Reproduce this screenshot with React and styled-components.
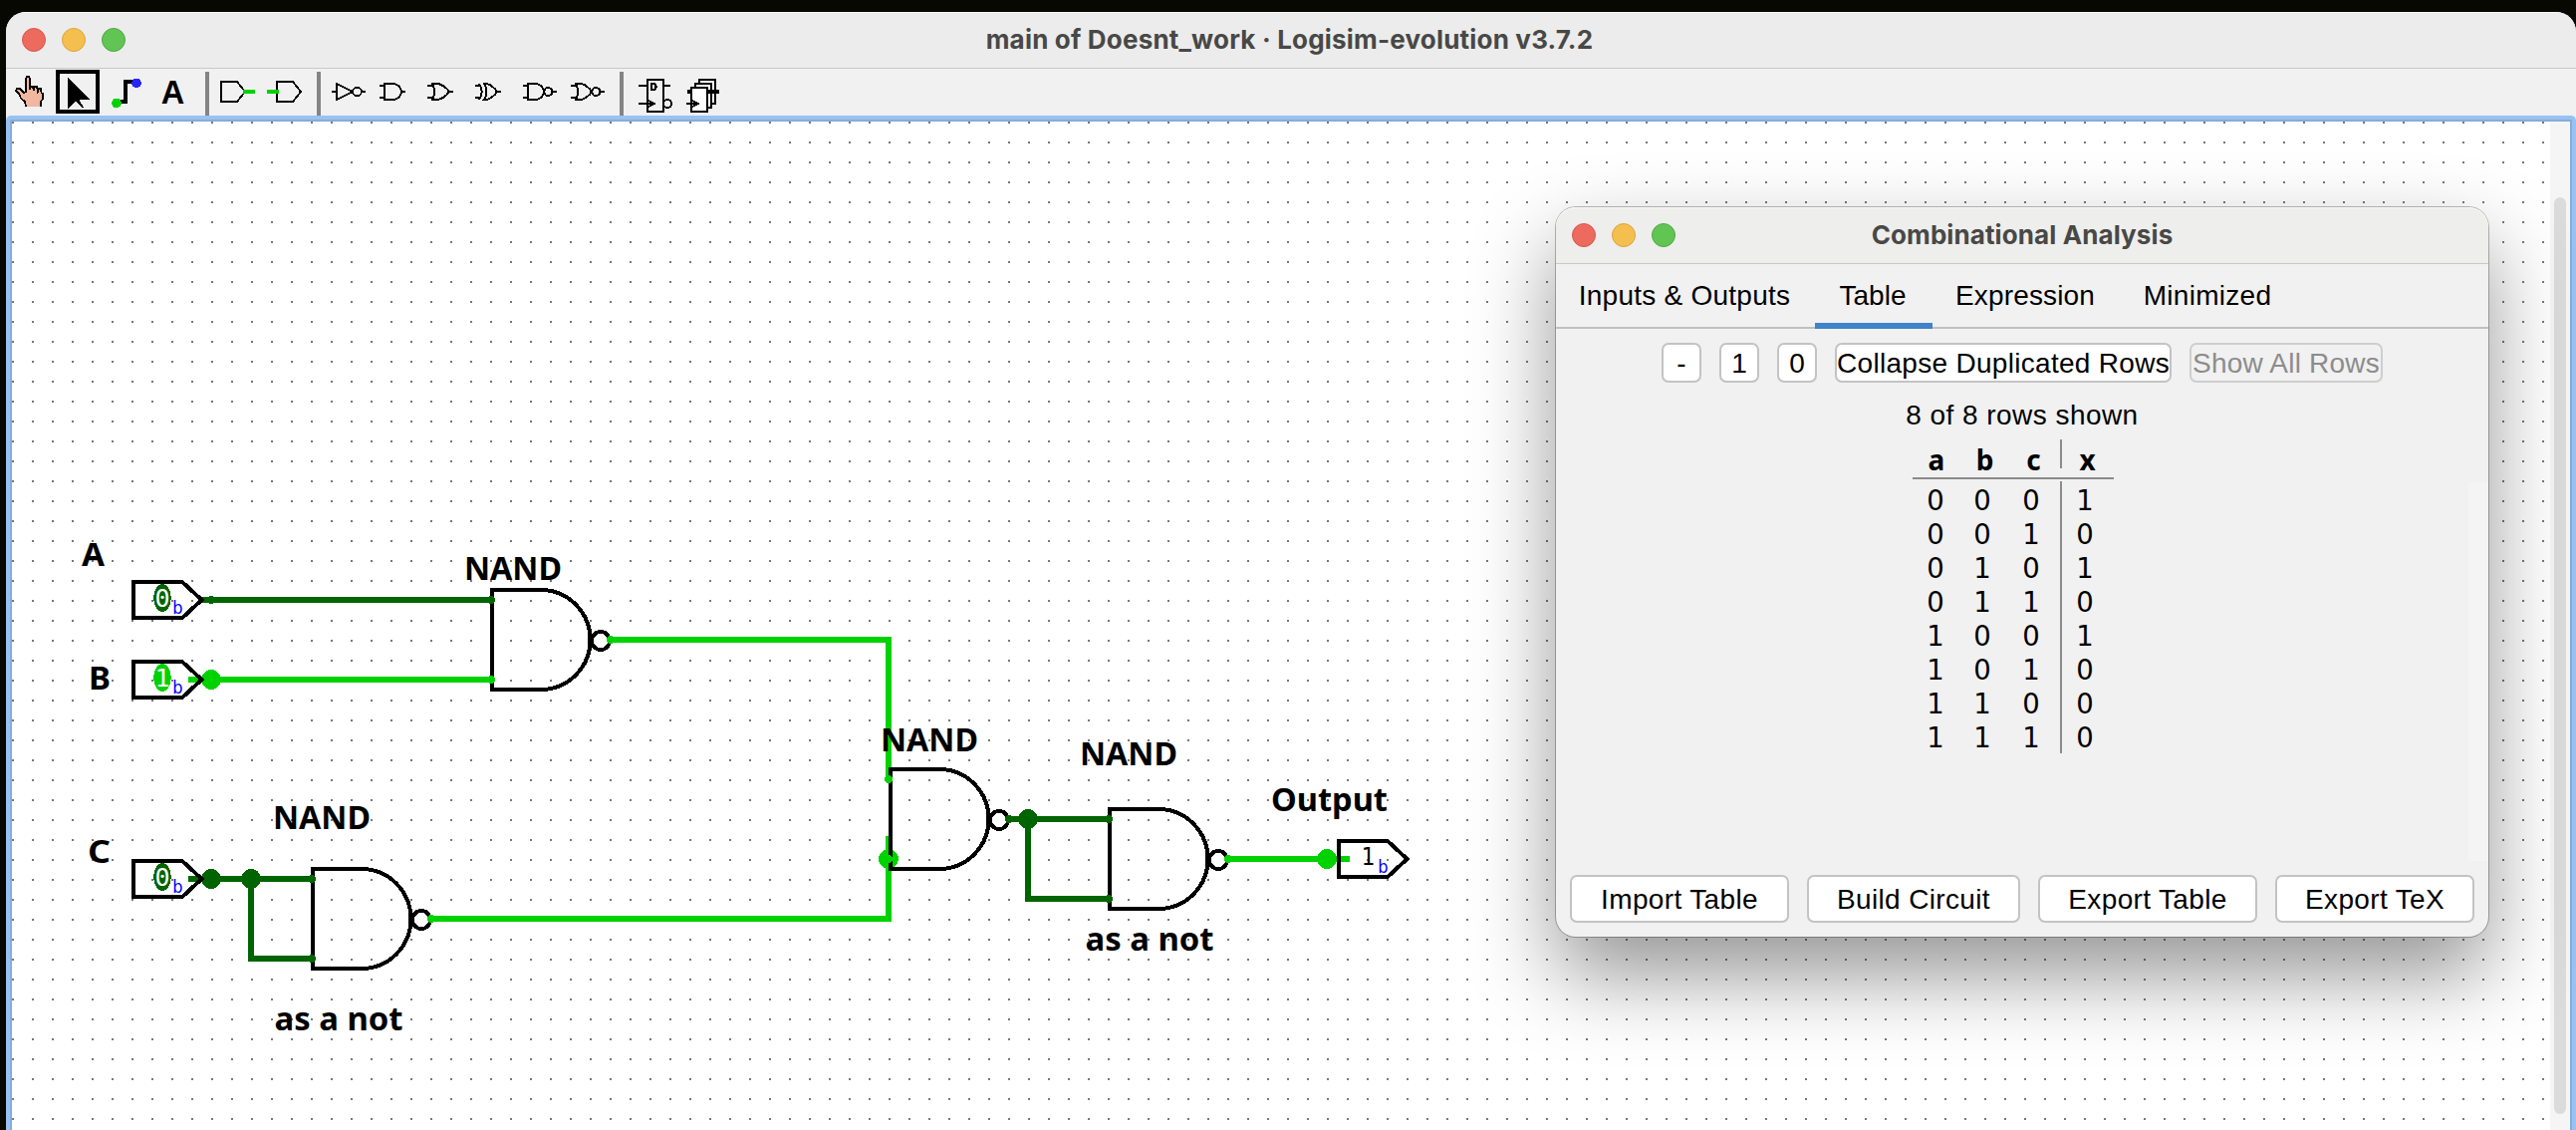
import React from "react";
import styled, { createGlobalStyle } from "styled-components";

const GlobalStyle = createGlobalStyle`
  *, *::before, *::after { box-sizing: border-box; }
  html, body { margin: 0; padding: 0; background: #080803; overflow: hidden; }
`;

const ON = "#00d200";
const OFF = "#006400";

const Desktop = styled.div`
  position: relative;
  display: flex;
  width: 2586px;
  height: 1134px;
  padding: 12px 0 0 6px;
  overflow: hidden;
  background: #080803;
`;

const MainWindow = styled.main`
  display: flex;
  flex-direction: column;
  flex: 1;
  background: #f1f1f1;
  border-radius: 20px 20px 0 0;
  overflow: hidden;
`;

const TitleBar = styled.header`
  position: relative;
  display: flex;
  align-items: center;
  justify-content: center;
  flex: none;
  height: ${(p) => p.$height}px;
  padding: 0 ${(p) => p.$shift || 0}px 1px 0;
  background: ${(p) => p.$bg};
  border-bottom: 1px solid #c9c9c9;
  box-shadow: inset 0 1px 0 #fafafa;
`;

const Title = styled.h1`
  margin: 0;
  color: #484846;
  font: 700 26px/32px Inter, "Liberation Sans", sans-serif;
  letter-spacing: ${(p) => p.$spacing}px;
  white-space: nowrap;
`;

const Lights = styled.div`
  position: absolute;
  left: 16px;
  top: ${(p) => p.$top}px;
  display: flex;
  gap: 16px;
`;

const Light = styled.span`
  width: 24px;
  height: 24px;
  border-radius: 50%;
  background: ${(p) => p.$fill};
  border: 1px solid ${(p) => p.$edge};
`;

const Toolbar = styled.nav`
  display: flex;
  flex: none;
  height: 47px;
  padding-top: 1px;
`;

const Tool = styled.svg`
  display: block;
  flex: none;
  width: 48px;
  height: 46px;
  fill: none;
  stroke: #000;
  stroke-width: 2;
`;

const Separator = styled.span`
  width: 4px;
  height: 44px;
  margin: 2px 6px 0 ${(p) => p.$before || 6}px;
  background: #848484;
`;

const Workspace = styled.section`
  display: flex;
  flex: 1;
  border-style: solid;
  border-color: #97c2f2;
  border-width: 4px 4px 0 4px;
  border-radius: 5px 5px 0 0;
`;

const WorkspaceInner = styled.div`
  display: flex;
  flex: 1;
  border-style: solid;
  border-color: #86add9;
  border-width: 2px 2px 0 2px;
  background: #fff;
`;

const Canvas = styled.svg`
  display: block;
  flex: none;
  width: 2548px;
  height: 1012px;
`;

const Scrollbar = styled.div`
  flex: none;
  width: 20px;
  padding: 76px 4px 0;
  background: #f5f5f5;
`;

const Thumb = styled.div`
  height: 920px;
  border-radius: 6px;
  background: #dbdbdb;
`;

const Dialog = styled.section`
  position: absolute;
  left: 1562px;
  top: 208px;
  display: flex;
  flex-direction: column;
  width: 936px;
  height: 732px;
  border-radius: 20px;
  background: #f1f1f1;
  box-shadow: 0 0 0 1px rgba(0, 0, 0, 0.27), 0 38px 84px rgba(0, 0, 0, 0.42);
  font: 400 28px/32px "Liberation Sans", Arial, sans-serif;
  color: #000;
`;

const DialogBar = styled(TitleBar)`
  border-radius: 20px 20px 0 0;
`;

const Tabs = styled.div`
  display: flex;
  flex: none;
  height: 65px;
  border-bottom: 2px solid #c0c0c0;
`;

const Tab = styled.button`
  display: flex;
  align-items: center;
  justify-content: center;
  flex: none;
  width: ${(p) => p.$width}px;
  height: 65px;
  padding: 4px 2px 0 0;
  border: 0;
  border-bottom: 6px solid ${(p) => (p.$active ? "#4083c9" : "transparent")};
  background: none;
  color: inherit;
  font: inherit;
  letter-spacing: ${(p) => p.$spacing || 0}px;
  white-space: nowrap;
`;

const ButtonRow = styled.div`
  display: flex;
  flex: none;
  justify-content: center;
  gap: 18px;
  padding-top: ${(p) => p.$top || 0}px;
`;

const Button = styled.button`
  display: flex;
  align-items: center;
  justify-content: center;
  flex: none;
  width: ${(p) => p.$width}px;
  height: ${(p) => p.$height || 40}px;
  padding: 2px 0 0;
  border: 2px solid ${(p) => (p.disabled ? "#cecece" : "#c3c3c3")};
  border-radius: 7px;
  background: ${(p) => (p.disabled ? "#f1f1f1" : "#fff")};
  color: ${(p) => (p.disabled ? "#8c8c8c" : "#000")};
  font: inherit;
  letter-spacing: ${(p) => p.$spacing || 0}px;
  white-space: nowrap;
`;

const RowCount = styled.p`
  flex: none;
  margin: 17px 0 0;
  text-align: center;
  letter-spacing: 0.45px;
`;

const TableArea = styled.div`
  display: grid;
  grid-template-columns: 1fr 20px;
  flex: 1;
  padding-top: 8px;
`;

const TruthTable = styled.div`
  display: flex;
  flex-direction: column;
  align-self: start;
  width: 202px;
  margin-left: 358px;
`;

const HeadRow = styled.div`
  display: grid;
  grid-template-columns: 48px 49px 49px 56px;
  height: 40px;
  border-bottom: 2px solid #8a8a8a;
  font: 700 28px/41px "Noto Sans", sans-serif;
  text-align: center;
`;

const HeadCell = styled.span`
  position: relative;
  &:last-child {
    padding-left: 3px;
  }
  &:last-child::before {
    content: "";
    position: absolute;
    left: 2px;
    top: 0;
    width: 2px;
    height: 29px;
    background: #8c8c8c;
  }
`;

const BodyGrid = styled.div`
  display: grid;
  grid-template-columns: 46px 48px 50px 58px;
  grid-auto-rows: 34px;
  margin-top: 2px;
  padding-bottom: 1px;
  background: linear-gradient(#8c8c8c, #8c8c8c) 148px 0 / 2px 100% no-repeat;
  font: 400 27.5px/39px "DejaVu Sans", sans-serif;
  text-align: center;
`;

const TableScroll = styled.div`
  height: 380px;
  margin-top: 43px;
  background: #f4f4f4;
`;

const Footer = styled(ButtonRow)`
  height: 62px;
`;

const light = [
  ["#ed6a5e", "#d9564b"],
  ["#f5bf4f", "#dba43c"],
  ["#61c554", "#50a744"],
];

function WindowLights({ top }) {
  return (
    <Lights $top={top}>
      {light.map(([fill, edge]) => (
        <Light key={fill} $fill={fill} $edge={edge} />
      ))}
    </Lights>
  );
}

function Icon({ x, children }) {
  return (
    <Tool viewBox={`${x} 70 48 46`} shapeRendering="crispEdges">
      {children}
    </Tool>
  );
}

function ToolIcons() {
  return (
    <Toolbar>
      <Icon x={6}>
        <path
          d="M26 107L25 102L21 98.500L19 94L16 91L17 89L20 89L24 93L26 92V79L27 77H29L30 79V90L31 87H33L34 91L35 87H37L38 92L39 89H41L41.500 93L43 94V99L41 102V107"
          fill="#f1b79f"
          strokeWidth="1.700"
        />
      </Icon>
      <Icon x={54}>
        <rect x="58" y="72" width="40" height="40" strokeWidth="4" />
        <path d="M68 77V110L76 101L82 108H84L79 99.500H90Z" fill="#000" stroke="none" />
      </Icon>
      <Icon x={102}>
        <path d="M117 102H126V82H136" strokeWidth="4" />
        <circle cx="117" cy="103.500" r="4.800" fill={ON} stroke="none" />
        <circle cx="137" cy="83.300" r="4.800" fill="#2626ff" stroke="none" />
      </Icon>
      <Icon x={150}>
        <text x="173.500" y="104" textAnchor="middle" fill="#000" stroke="none" fontFamily="Liberation Sans, Arial, sans-serif" fontWeight="700" fontSize="32.500">
          A
        </text>
      </Icon>
      <Separator $before={8} />
      <Icon x={216}>
        <path d="M222 82H238L246 92L238 102H222Z" />
        <path d="M244 92H256" stroke={ON} strokeWidth="4" />
      </Icon>
      <Icon x={264}>
        <path d="M278 82H294L302 92L294 102H278Z" />
        <path d="M268 92H280" stroke={ON} strokeWidth="4" />
      </Icon>
      <Separator />
      <Icon x={328}>
        <path d="M333 92H338M338 84L354 92L338 100ZM363 92H367" />
        <circle cx="358.500" cy="92" r="4.300" />
      </Icon>
      <Icon x={376}>
        <path d="M381 86H386M381 98H386M386 84H395Q402 85 403 92Q402 99 395 100H386ZM403 92H407" />
      </Icon>
      <Icon x={424}>
        <path d="M429 86H435M429 98H435M434 84H440Q447 86 451 92Q447 98 440 100H434Q438 92 434 84ZM451 92H455" />
      </Icon>
      <Icon x={472}>
        <path d="M477 86H483M477 98H483M481 84Q486.500 92 481 100M486 84H489Q495 86 499 92Q495 98 489 100H486Q491 92 486 84ZM498 92H503" />
      </Icon>
      <Icon x={520}>
        <path d="M525 86H530M525 98H530M530 84H538Q545 85 546 92Q545 99 538 100H530ZM554 92H559" />
        <circle cx="550.300" cy="92" r="4" />
      </Icon>
      <Icon x={568}>
        <path d="M573 86H579M573 98H579M578 84H584Q590 86 594 92Q590 98 584 100H578Q582 92 578 84ZM602 92H607" />
        <circle cx="598.300" cy="92" r="4" />
      </Icon>
      <Separator />
      <Icon x={632}>
        <path d="M650 80H666V112H650ZM641 86H650M666 86H673M641 104H656M651 101L657 104L651 107M654 84H657L659 87L657 90H654Z" />
        <circle cx="670" cy="104" r="4" />
      </Icon>
      <Icon x={680}>
        <path d="M702 80H718V104H702Z" fill="#fff" />
        <path d="M698 84H714V108H698Z" fill="#fff" />
        <path d="M694 88H710V112H694Z" fill="#fff" />
        <path d="M690 92H695M710 92H722" strokeWidth="3.600" />
        <path d="M689 104H700M695 101L701 104L695 107" />
      </Icon>
    </Toolbar>
  );
}

function Gate({ x, y }) {
  return (
    <g fill="none" stroke="#000" strokeWidth="4">
      <path d={`M${x + 49} ${y}H${x}V${y + 100}H${x + 49}A49.500 50 0 0 0 ${x + 49} ${y}`} />
      <circle cx={x + 109} cy={y + 51} r="9" />
    </g>
  );
}

function Pin({ x, y, children }) {
  return (
    <g>
      {children}
      <path d={`M${x} ${y - 18}H${x + 49}L${x + 68.5} ${y}L${x + 49} ${y + 18}H${x}Z`} fill="none" stroke="#000" strokeWidth="4" />
    </g>
  );
}

function InputPin({ y, value, stub }) {
  const color = value ? ON : OFF;
  return (
    <Pin x={134} y={y}>
      {stub && <path d={`M189 ${y}H204`} stroke={color} strokeWidth="6" />}
      <ellipse cx="163" cy={y - 2} rx="8.800" ry="14" fill={color} />
      <text x="163" y={y + 6.5} textAnchor="middle" fill="#fff" fontSize="25" fontFamily="DejaVu Sans Mono, monospace">
        {value}
      </text>
      <BitMark x={178.300} y={y + 14} />
    </Pin>
  );
}

function BitMark({ x, y }) {
  return (
    <text x={x} y={y} textAnchor="middle" fill="#0000ff" fontSize="18" fontFamily="DejaVu Sans Condensed, DejaVu Sans, sans-serif">
      b
    </text>
  );
}

const labels = [
  ["A", 82, 568, 23],
  ["B", 89, 692, 22],
  ["C", 88, 866, 23],
  ["NAND", 466, 582, 98],
  ["NAND", 274, 832, 98],
  ["NAND", 884, 754, 98],
  ["NAND", 1084, 768, 98],
  ["Output", 1276, 814, 117],
  ["as a not", 1089.5, 954, 129],
  ["as a not", 275.5, 1034, 129],
];

function Circuit() {
  return (
    <Canvas viewBox="12 122 2548 1012">
      <defs>
        <pattern id="dots" x="12" y="122" width="20" height="20" patternUnits="userSpaceOnUse">
          <rect width="2" height="2" fill="#777" />
        </pattern>
      </defs>
      <rect x="12" y="122" width="2548" height="1012" fill="url(#dots)" />
      <g shapeRendering="crispEdges">
        <g fill="none" strokeWidth="6" stroke={ON}>
          <path d="M212 682H494" />
          <path d="M612 642H892V784" />
          <path d="M432 922H892V839" />
          <path d="M1232 862H1355" />
        </g>
        <g fill="none" strokeWidth="6" stroke={OFF}>
          <path d="M202 602H494" />
          <path d="M202 882H314M252 882V962H314" />
          <path d="M1010 822H1114M1032 822V902H1114" />
        </g>
        <g fill={ON}>
          <circle cx="212" cy="682" r="10" />
          <circle cx="892" cy="862" r="10" />
          <circle cx="1332" cy="862" r="10" />
        </g>
        <g fill={OFF}>
          <circle cx="212" cy="882" r="10" />
          <circle cx="252" cy="882" r="10" />
          <circle cx="1032" cy="822" r="10" />
          <circle cx="212" cy="602" r="4" />
        </g>
        <Gate x={494} y={592} />
        <Gate x={314} y={872} />
        <Gate x={894} y={772} />
        <Gate x={1114} y={812} />
        <g fill={ON}>
          <circle cx="493" cy="682" r="4" />
          <circle cx="613" cy="642" r="4" />
          <circle cx="433" cy="922" r="4" />
          <circle cx="892" cy="782" r="4" />
          <circle cx="892" cy="862" r="4" />
          <circle cx="1233" cy="862" r="4" />
        </g>
        <g fill={OFF}>
          <circle cx="493" cy="602" r="4" />
          <circle cx="313" cy="882" r="4" />
          <circle cx="313" cy="962" r="4" />
          <circle cx="1013" cy="822" r="4" />
          <circle cx="1113" cy="822" r="4" />
          <circle cx="1113" cy="902" r="4" />
        </g>
        <InputPin y={602} value={0} />
        <InputPin y={682} value={1} stub />
        <InputPin y={882} value={0} stub />
        <Pin x={1344} y={862}>
          <text x="1373.500" y="868" textAnchor="middle" fontSize="24" fontFamily="DejaVu Sans Condensed, DejaVu Sans, sans-serif">
            1
          </text>
          <BitMark x={1388.300} y={876} />
        </Pin>
      </g>
      <g fontFamily="Noto Sans, sans-serif" fontWeight="700" fontSize="32">
        {labels.map(([text, x, y, width]) => (
          <text key={`${x}-${y}`} x={x} y={y} textLength={width} lengthAdjust="spacingAndGlyphs">
            {text}
          </text>
        ))}
      </g>
    </Canvas>
  );
}

const rows = ["0001", "0010", "0101", "0110", "1001", "1010", "1100", "1110"];

function AnalysisDialog() {
  return (
    <Dialog>
      <DialogBar $height={57} $bg="#eeeeec">
        <WindowLights top={16} />
        <Title $spacing={0.1}>Combinational Analysis</Title>
      </DialogBar>
      <Tabs>
        <Tab $width={260} $spacing={0.25}>Inputs &amp; Outputs</Tab>
        <Tab $width={118} $active>Table</Tab>
        <Tab $width={188} $spacing={0.15}>Expression</Tab>
        <Tab $width={178} $spacing={0.3}>Minimized</Tab>
      </Tabs>
      <ButtonRow $top={14}>
        <Button $width={40}>-</Button>
        <Button $width={40}>1</Button>
        <Button $width={40}>0</Button>
        <Button $width={338} $spacing={0.3}>Collapse Duplicated Rows</Button>
        <Button $width={194} $spacing={0.2} disabled>Show All Rows</Button>
      </ButtonRow>
      <RowCount>8 of 8 rows shown</RowCount>
      <TableArea>
        <TruthTable>
          <HeadRow>
            {["a", "b", "c", "x"].map((name) => (
              <HeadCell key={name}>{name}</HeadCell>
            ))}
          </HeadRow>
          <BodyGrid>
            {rows.flatMap((row) =>
              [...row].map((bit, i) => <span key={`${row}-${i}`}>{bit}</span>)
            )}
          </BodyGrid>
        </TruthTable>
        <TableScroll />
      </TableArea>
      <Footer>
        <Button $width={220} $height={48} $spacing={0.35}>Import Table</Button>
        <Button $width={214} $height={48} $spacing={0.35}>Build Circuit</Button>
        <Button $width={220} $height={48} $spacing={0.35}>Export Table</Button>
        <Button $width={200} $height={48} $spacing={0.35}>Export TeX</Button>
      </Footer>
    </Dialog>
  );
}

export default function App() {
  return (
    <>
      <GlobalStyle />
      <Desktop>
        <MainWindow>
          <TitleBar $height={57} $shift={3} $bg="#ececec">
            <WindowLights top={16} />
            <Title $spacing={0.19}>main of Doesnt_work · Logisim-evolution v3.7.2</Title>
          </TitleBar>
          <ToolIcons />
          <Workspace>
            <WorkspaceInner>
              <Circuit />
              <Scrollbar>
                <Thumb />
              </Scrollbar>
            </WorkspaceInner>
          </Workspace>
        </MainWindow>
        <AnalysisDialog />
      </Desktop>
    </>
  );
}
